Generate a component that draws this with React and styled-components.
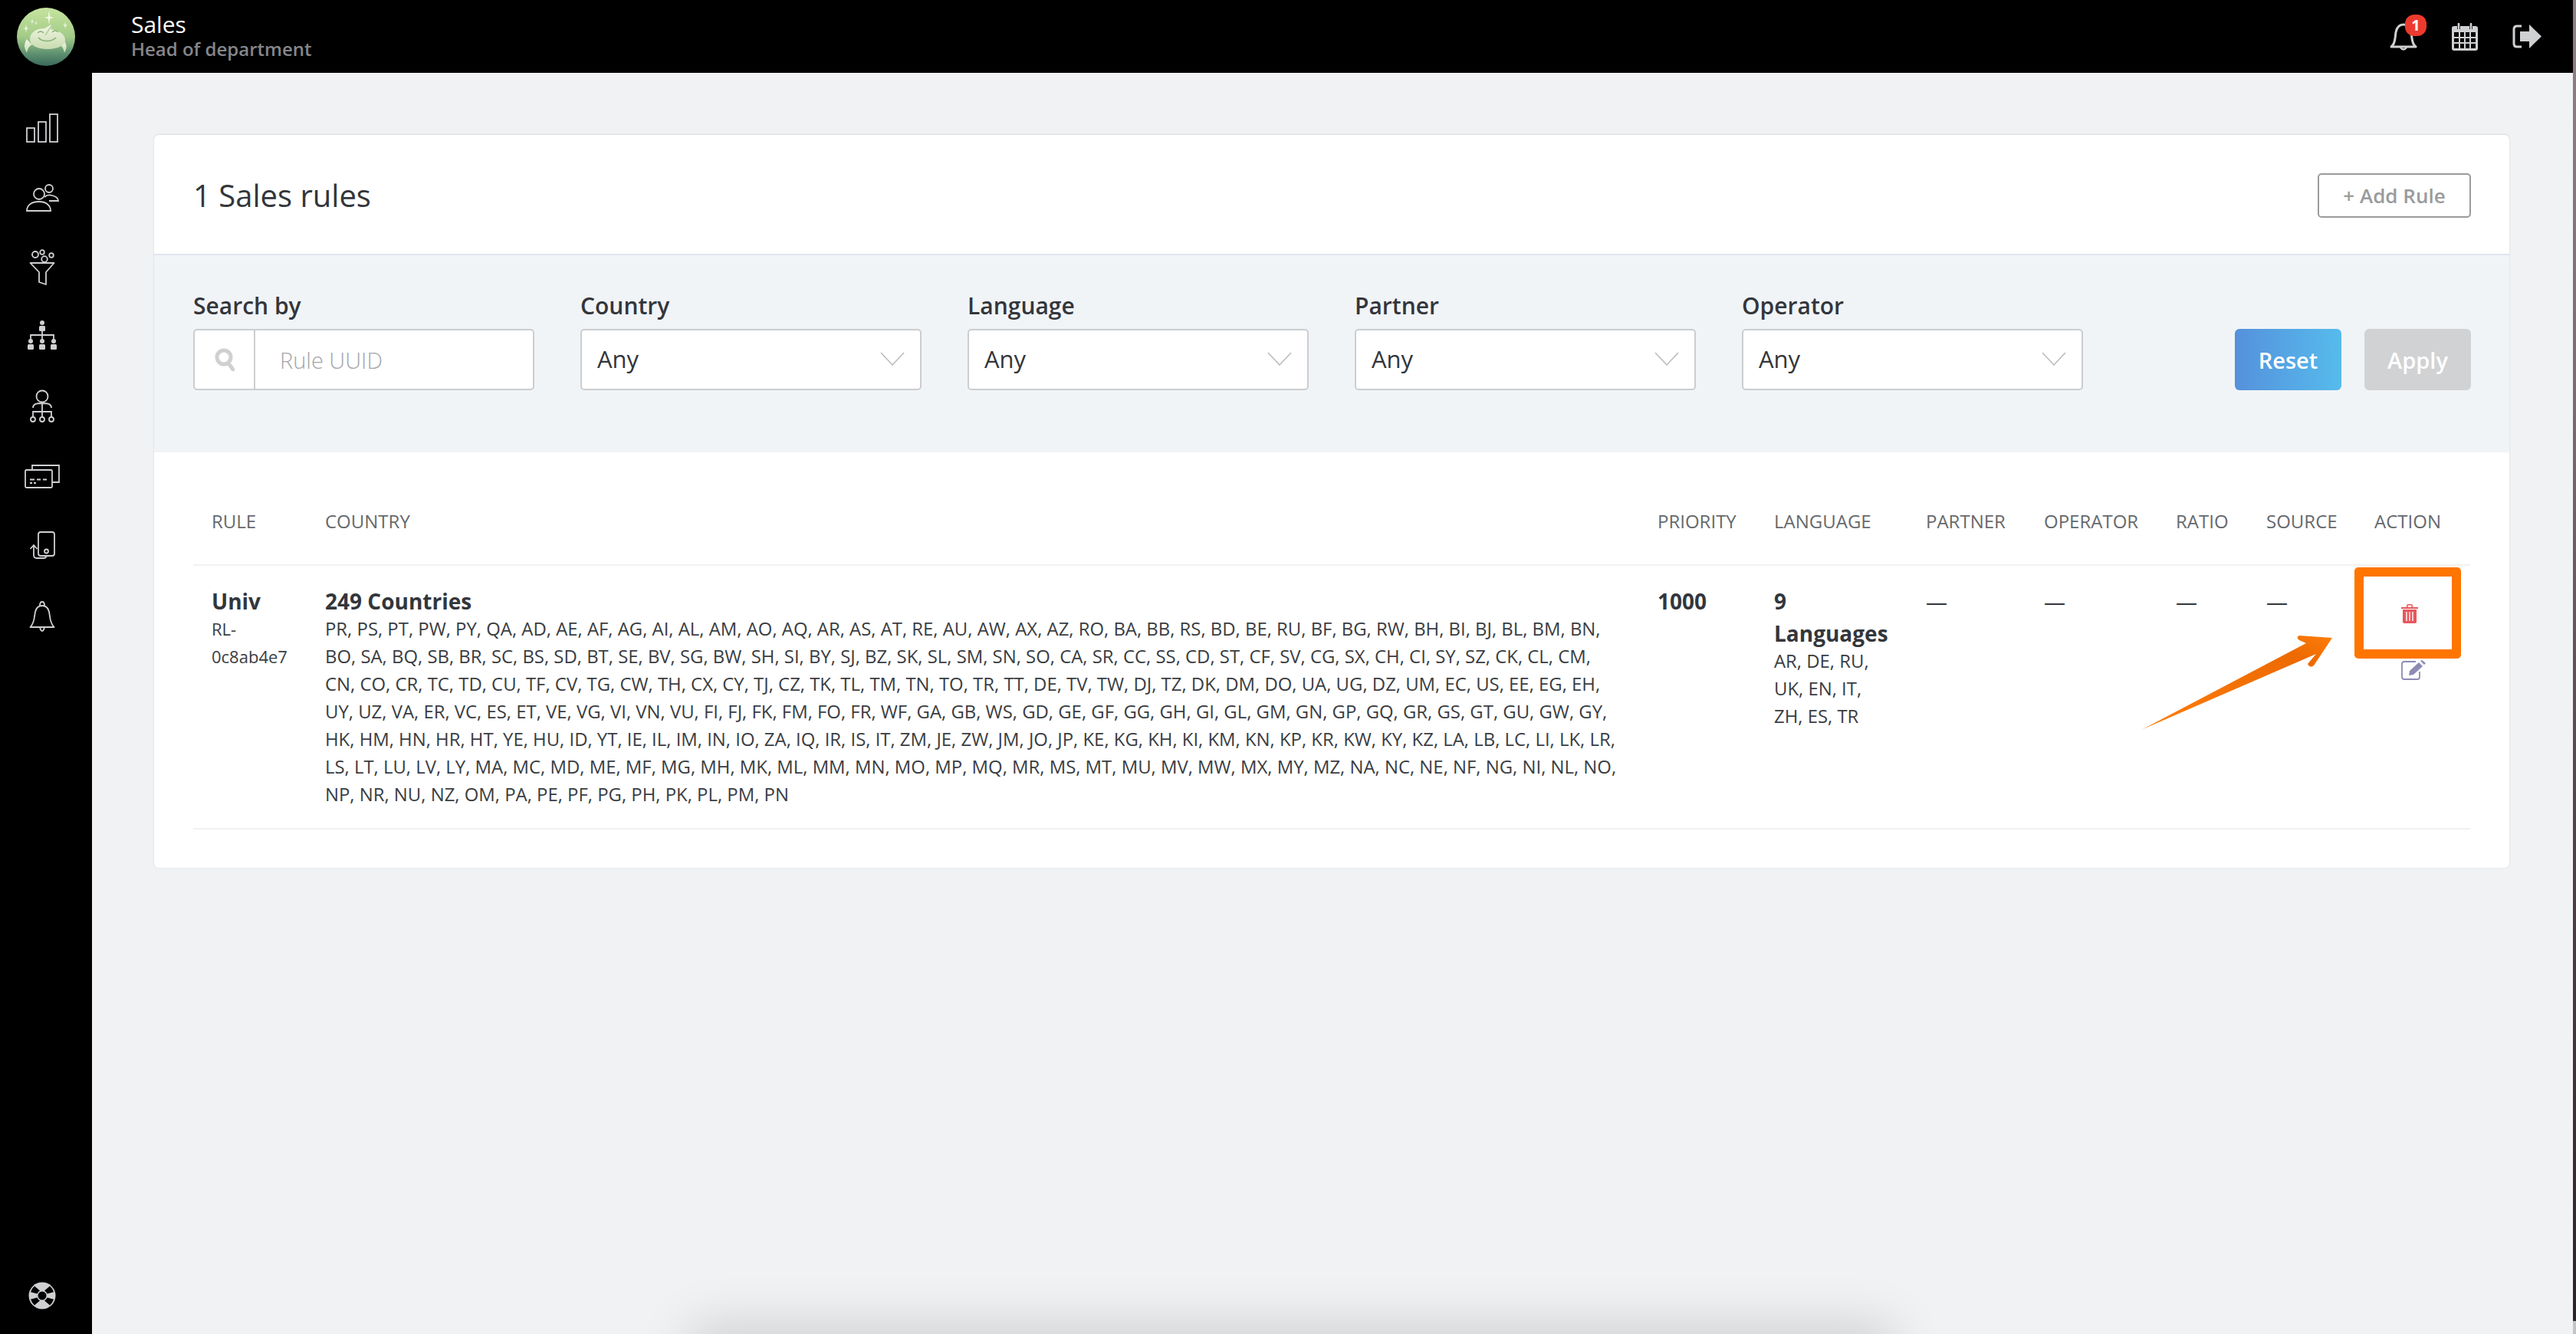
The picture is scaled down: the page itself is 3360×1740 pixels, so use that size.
import React from 'react'
import styled, { createGlobalStyle } from 'styled-components'

const GlobalStyle = createGlobalStyle`
  html, body {
    margin: 0;
    padding: 0;
    height: 100%;
    background: #f1f2f4;
  }
  body {
    font-family: "Open Sans", sans-serif;
    color: #33363b;
    overflow: hidden;
  }
`

const Page = styled.div`
  position: relative;
  display: grid;
  grid-template-columns: 120px 1fr;
  grid-template-rows: 95px 1fr;
  width: 3360px;
  height: 1740px;
  overflow: hidden;
`

const Topbar = styled.header`
  grid-column: 1 / 3;
  display: flex;
  align-items: center;
  background: #000;
  padding: 0 22px;
`

const Logo = styled.svg`
  width: 76px;
  height: 76px;
  flex: none;
`

const Titles = styled.div`
  margin-left: 73px;
  flex: 1;
  margin-top: -2px;
`

const Title = styled.div`
  font-size: 30px;
  line-height: 34px;
  color: #fff;
`

const Subtitle = styled.div`
  font-size: 24px;
  line-height: 30px;
  font-weight: 600;
  color: #85868a;
`

const TopIcons = styled.div`
  display: flex;
  align-items: center;
  gap: 45px;
  margin-right: 23px;
`

const BellWrap = styled.div`
  position: relative;
  width: 36px;
  height: 40px;
`

const Badge = styled.span`
  position: absolute;
  top: -9px;
  left: 20px;
  width: 28px;
  height: 28px;
  border-radius: 12px;
  background: #ee3a2e;
  color: #fff;
  font-size: 20px;
  font-weight: 700;
  line-height: 28px;
  text-align: center;
`

const Sidebar = styled.nav`
  display: flex;
  flex-direction: column;
  align-items: center;
  background: #000;
  padding: 48px 10px 32px 0;
`

const NavIcon = styled.svg`
  width: 48px;
  height: 48px;
  margin-bottom: 43px;
  fill: none;
  stroke: #cfd0d2;
  stroke-width: 1.8;
`

const NavSpacer = styled.div`
  flex: 1;
`

const HelpIcon = styled.svg`
  width: 36px;
  height: 36px;
`

const Main = styled.main`
  padding: 81px 87px 0 81px;
`

const Card = styled.section`
  background: #fff;
  border-radius: 6px;
  box-shadow: 0 -1px 2px #dcdddf, 0 0 2px #d6d7da;
`

const CardHead = styled.div`
  display: flex;
  align-items: center;
  justify-content: space-between;
  height: 155px;
  box-sizing: content-box;
  padding: 0 50px 0 51px;
  border-bottom: 2px solid #e1e7ef;
`

const CardTitle = styled.h1`
  margin: 2px 0 0;
  font-size: 40px;
  font-weight: 400;
  color: #33363b;
`

const AddButton = styled.button`
  width: 200px;
  height: 58px;
  margin-top: 2px;
  border: 2px solid #9a9b9c;
  border-radius: 5px;
  background: #fff;
  color: #9a9b9c;
  font: 600 26px "Open Sans", sans-serif;
`

const Filters = styled.div`
  display: flex;
  align-items: flex-end;
  height: 257px;
  padding: 0 50px 81px 51px;
  background: #f1f4f7;
  box-sizing: border-box;
`

const Field = styled.label`
  display: flex;
  flex-direction: column;
  width: 445px;
  margin-right: 60px;
`

const FieldLabel = styled.span`
  font-size: 30px;
  line-height: 40px;
  font-weight: 600;
  margin-bottom: 10px;
`

const SelectBox = styled.div`
  display: flex;
  align-items: center;
  justify-content: space-between;
  height: 80px;
  box-sizing: border-box;
  background: #fff;
  border: 2px solid #cbcdd0;
  border-radius: 5px;
  padding: 0 20px 3px 20px;
  font-size: 31px;
`

const SearchBox = styled.div`
  display: flex;
  align-items: stretch;
  height: 80px;
  box-sizing: border-box;
  background: #fff;
  border: 2px solid #cbcdd0;
  border-radius: 5px;
  font-size: 29px;
  font-weight: 300;
  color: #a4a6a9;
`

const SearchAddon = styled.span`
  display: flex;
  align-items: center;
  justify-content: center;
  width: 77px;
  border-right: 2px solid #cbcdd0;
`

const Placeholder = styled.span`
  display: flex;
  align-items: center;
  padding-left: 32px;
`

const Actions = styled.div`
  display: flex;
  gap: 30px;
  margin-left: auto;
`

const FilterButton = styled.button`
  width: 139px;
  height: 80px;
  border: none;
  border-radius: 6px;
  color: #fff;
  font: 600 29px "Open Sans", sans-serif;
  padding-top: 2px;
  background: ${p => (p.$primary ? 'linear-gradient(90deg, #5591dc, #56bbec)' : '#d1d2d4')};
`

const Table = styled.div`
  padding: 0 51px 50px;
`

const Row = styled.div`
  display: grid;
  grid-template-columns: 148px 1738px 152px 198px 154px 172px 118px 141px 1fr;
  border-bottom: 2px solid #f0f1f2;
`

const HeadCell = styled.div`
  height: 146px;
  padding: 74px 0 0 24px;
  box-sizing: border-box;
  font-size: 24px;
  line-height: 32px;
  color: #66696d;
`

const Cell = styled.div`
  padding: 25px 0 0 24px;
  height: 342px;
  box-sizing: border-box;
  min-width: 0;
`

const Strong = styled.div`
  font-size: 28px;
  line-height: 42px;
  font-weight: 700;
  color: #33363b;
`

const SmallList = styled.div`
  margin-top: -3px;
`

const Small = styled.div`
  font-size: ${p => p.$size || '23.9px'};
  line-height: 36px;
  color: #3a3d42;
  white-space: nowrap;
`

const Dash = styled.div`
  font-size: 28px;
  line-height: 42px;
  color: #33363b;
`

const ActionCell = styled(Cell)`
  display: flex;
  flex-direction: column;
  align-items: flex-start;
  padding: 50px 0 0 59px;
  gap: 48px;
`

const Highlight = styled.div`
  position: absolute;
  left: 3071px;
  top: 740px;
  width: 139px;
  height: 119px;
  box-sizing: border-box;
  border: 12px solid #ff7500;
  border-radius: 5px;
`

const Arrow = styled.svg`
  position: absolute;
  left: 2780px;
  top: 820px;
  width: 270px;
  height: 145px;
`

const BottomShade = styled.div`
  position: absolute;
  left: 910px;
  bottom: -60px;
  width: 1550px;
  height: 60px;
  box-shadow: 0 0 70px 8px rgba(0, 0, 0, 0.16);
`

const Edge = styled.div`
  position: absolute;
  right: 0;
  top: 0;
  width: 4px;
  height: 100%;
  background: linear-gradient(180deg, #8f7f88 0%, #7d6b73 30%, #55444a 60%, #2d2327 99%, #c4c4c4 99%);
`

const columns = ['RULE', 'COUNTRY', 'PRIORITY', 'LANGUAGE', 'PARTNER', 'OPERATOR', 'RATIO', 'SOURCE', 'ACTION']

const countryLines = [
  'PR, PS, PT, PW, PY, QA, AD, AE, AF, AG, AI, AL, AM, AO, AQ, AR, AS, AT, RE, AU, AW, AX, AZ, RO, BA, BB, RS, BD, BE, RU, BF, BG, RW, BH, BI, BJ, BL, BM, BN,',
  'BO, SA, BQ, SB, BR, SC, BS, SD, BT, SE, BV, SG, BW, SH, SI, BY, SJ, BZ, SK, SL, SM, SN, SO, CA, SR, CC, SS, CD, ST, CF, SV, CG, SX, CH, CI, SY, SZ, CK, CL, CM,',
  'CN, CO, CR, TC, TD, CU, TF, CV, TG, CW, TH, CX, CY, TJ, CZ, TK, TL, TM, TN, TO, TR, TT, DE, TV, TW, DJ, TZ, DK, DM, DO, UA, UG, DZ, UM, EC, US, EE, EG, EH,',
  'UY, UZ, VA, ER, VC, ES, ET, VE, VG, VI, VN, VU, FI, FJ, FK, FM, FO, FR, WF, GA, GB, WS, GD, GE, GF, GG, GH, GI, GL, GM, GN, GP, GQ, GR, GS, GT, GU, GW, GY,',
  'HK, HM, HN, HR, HT, YE, HU, ID, YT, IE, IL, IM, IN, IO, ZA, IQ, IR, IS, IT, ZM, JE, ZW, JM, JO, JP, KE, KG, KH, KI, KM, KN, KP, KR, KW, KY, KZ, LA, LB, LC, LI, LK, LR,',
  'LS, LT, LU, LV, LY, MA, MC, MD, ME, MF, MG, MH, MK, ML, MM, MN, MO, MP, MQ, MR, MS, MT, MU, MV, MW, MX, MY, MZ, NA, NC, NE, NF, NG, NI, NL, NO,',
  'NP, NR, NU, NZ, OM, PA, PE, PF, PG, PH, PK, PL, PM, PN',
]

const star = (x, y, r) =>
  `M${x} ${y - r} L${x + r * 0.14} ${y - r * 0.14} L${x + r * 0.7} ${y} L${x + r * 0.14} ${y + r * 0.14} L${x} ${y + r} L${x - r * 0.14} ${y + r * 0.14} L${x - r * 0.7} ${y} L${x - r * 0.14} ${y - r * 0.14} Z`

const LogoMark = () => (
  <Logo viewBox="0 0 76 76">
    <defs>
      <linearGradient id="logoBg" x1="0" y1="0" x2="0" y2="1">
        <stop offset="0" stopColor="#c6e4a0" />
        <stop offset="0.5" stopColor="#a2cb87" />
        <stop offset="0.8" stopColor="#5c8f70" />
        <stop offset="1" stopColor="#3a6a5a" />
      </linearGradient>
      <linearGradient id="logoHead" x1="0" y1="0" x2="0" y2="1">
        <stop offset="0" stopColor="#f2f6e6" />
        <stop offset="1" stopColor="#c9dcb0" />
      </linearGradient>
    </defs>
    <circle cx="38" cy="38" r="38" fill="url(#logoBg)" />
    <path d="M13 41 Q7 49 13 59 Q14 51 20 48 Q16 45 13 41 Z M60 41 Q68 49 62 59 Q61 51 55 48 Q59 45 60 41 Z" fill="url(#logoHead)" />
    <path d="M17 41 C17 33 25 27 36 27 L47 21 L44 28 C56 30 63 35 63 42 C63 50 52 54 40 54 C28 54 17 50 17 41 Z" fill="url(#logoHead)" />
    <path d="M47 21 L37 36" stroke="#9dc086" strokeWidth="1.2" />
    <path d="M28 39 C33 45 45 45 51 39" fill="none" stroke="#8cb27a" strokeWidth="1.6" />
    <path d="M27 33 q4 -4 8 0 M46 32 q4 -4 8 0" fill="none" stroke="#8cb27a" strokeWidth="1.4" />
    <path d={`${star(42, 13, 9)} ${star(12, 27, 6)} ${star(20, 18, 4)} ${star(25, 20, 3)} ${star(63, 23, 5)}`} fill="#f3f8e4" />
  </Logo>
)

const TrashIcon = () => (
  <svg width="22" height="25" viewBox="0 0 22 25" style={{ display: 'block' }}>
    <path d="M0 4 H22 V6 H0 Z M7 4 V2 Q7 0 9 0 H13 Q15 0 15 2 V4 H13.5 V1.5 H8.5 V4 Z" fill="#e8565c" />
    <path d="M2 7 H20 V23 Q20 25 18 25 H4 Q2 25 2 23 Z" fill="#e8565c" />
    <path d="M7 10 V22 M11 10 V22 M15 10 V22" stroke="#fff" strokeWidth="1.4" />
  </svg>
)

const EditIcon = () => (
  <svg width="32" height="26" viewBox="0 0 32 26" style={{ display: 'block' }}>
    <path d="M19 2 H4 Q1 2 1 5 V22 Q1 25 4 25 H21 Q24 25 24 22 V15" fill="none" stroke="#8c8bb4" strokeWidth="1.8" />
    <path d="M23 3 L28 8 L16 19 L10 20 L11 14 Z M25 1 L27 0 L32 4 L30 6 Z" fill="#8c8bb4" />
  </svg>
)

const Chevron = () => (
  <svg width="32" height="18" viewBox="0 0 32 18">
    <path d="M1 1 L16 17 L31 1" fill="none" stroke="#b9babd" strokeWidth="1.5" />
  </svg>
)

const SearchIcon = () => (
  <svg width="26" height="30" viewBox="0 0 26 30">
    <circle cx="12" cy="12" r="9" fill="none" stroke="#cfd0d2" strokeWidth="5" />
    <path d="M18 20 L24 28" stroke="#cfd0d2" strokeWidth="5" strokeLinecap="round" />
  </svg>
)

export default function App() {
  return (
    <Page>
      <GlobalStyle />
      <Topbar>
        <LogoMark />
        <Titles>
          <Title>Sales</Title>
          <Subtitle>Head of department</Subtitle>
        </Titles>
        <TopIcons>
          <BellWrap>
            <svg width="36" height="40" viewBox="0 0 36 40" fill="none" stroke="#cfd0d2" strokeWidth="3">
              <path d="M2 33 Q6 30 7 22 L8 14 Q10 4 18 4 Q26 4 28 14 L29 22 Q30 30 34 33 Z" strokeLinejoin="round" />
              <path d="M14 34 Q18 39 22 34" strokeWidth="2.4" />
            </svg>
            <Badge>1</Badge>
          </BellWrap>
          <svg width="34" height="36" viewBox="0 0 34 36">
            <path fillRule="evenodd" fill="#cfd0d2" d="M3 4 H7 V8 H11 V4 H23 V8 H27 V4 H31 Q34 4 34 7 V33 Q34 36 31 36 H3 Q0 36 0 33 V7 Q0 4 3 4 Z M3 12 V18 H9 V12 Z M11 12 V18 H16 V12 Z M18 12 V18 H23 V12 Z M25 12 V18 H31 V12 Z M3 20 V25 H9 V20 Z M11 20 V25 H16 V20 Z M18 20 V25 H23 V20 Z M25 20 V25 H31 V20 Z M3 27 V33 H9 V27 Z M11 27 V33 H16 V27 Z M18 27 V33 H23 V27 Z M25 27 V33 H31 V27 Z" />
            <path d="M9 1 V7 M25 1 V7" stroke="#cfd0d2" strokeWidth="2.6" strokeLinecap="round" />
          </svg>
          <svg width="38" height="31" viewBox="0 0 38 31">
            <path d="M12 2 H6 Q2 2 2 6 V25 Q2 29 6 29 H12" fill="none" stroke="#cfd0d2" strokeWidth="3" />
            <path d="M10 9 H22 V0 L38 15.5 L22 31 V22 H10 Z" fill="#cfd0d2" />
          </svg>
        </TopIcons>
      </Topbar>

      <Sidebar>
        <NavIcon viewBox="0 0 48 48">
          <rect x="4" y="24" width="10" height="18" />
          <rect x="19" y="16" width="10" height="26" />
          <rect x="34" y="6" width="10" height="36" />
        </NavIcon>
        <NavIcon viewBox="0 0 48 48">
          <circle cx="20" cy="19" r="7" />
          <path d="M4 41 C4 33 11 29 20 29 C28 29 35 33 35 41 Z" />
          <circle cx="33" cy="12" r="5" />
          <path d="M27 23 C30 20 34 20 37 21 C41 22 45 24 45 28 H33" />
        </NavIcon>
        <NavIcon viewBox="0 0 48 48">
          <circle cx="15" cy="7" r="4" />
          <circle cx="24" cy="4" r="2.8" />
          <circle cx="36" cy="8" r="2.8" />
          <circle cx="27" cy="13" r="3.8" />
          <path d="M8.5 18 H39.5 L29 30 V46 L20 43 V30 Z" strokeLinejoin="round" />
        </NavIcon>
        <NavIcon viewBox="0 0 48 48">
          <path d="M9 26 V21 H39 V26 M24 15 V30" />
          <g fill="#cfd0d2" stroke="none">
            <circle cx="24" cy="5" r="3" />
            <rect x="20" y="9" width="8" height="7" rx="1.5" />
            <circle cx="9" cy="29" r="3" />
            <rect x="5" y="33" width="8" height="7" rx="1.5" />
            <circle cx="24" cy="29" r="3" />
            <rect x="20" y="33" width="8" height="7" rx="1.5" />
            <circle cx="39" cy="29" r="3" />
            <rect x="35" y="33" width="8" height="7" rx="1.5" />
          </g>
        </NavIcon>
        <NavIcon viewBox="0 0 48 48">
          <circle cx="24" cy="10" r="7.5" />
          <path d="M12 25 C12 20 16 19 24 19 C32 19 36 20 36 25 M24 19 V37 M12 37 V30 H36 V37" />
          <circle cx="12" cy="40" r="3" />
          <circle cx="24" cy="40" r="3" />
          <circle cx="36" cy="40" r="3" />
        </NavIcon>
        <NavIcon viewBox="0 0 48 48">
          <rect x="2" y="15" width="35" height="23" rx="1.5" />
          <path d="M11 15 V9 H46 V31 H37" />
          <path d="M8 27.5 H14 M17 27.5 H22 M25 27.5 H30 M8 32 H11 M13 32 H16" />
        </NavIcon>
        <NavIcon viewBox="0 0 48 48">
          <rect x="19" y="5" width="21" height="31" rx="3" />
          <circle cx="29.5" cy="30" r="2.5" />
          <path d="M13 23 V35 Q13 39 17 39 H26 Q29 39 30 36 M8.5 27 L13 22 L17.5 27" />
        </NavIcon>
        <NavIcon viewBox="0 0 48 48">
          <path d="M8.5 38 Q13 33 14 24 L15 18 Q17 10 24 10 Q31 10 33 18 L34 24 Q35 33 39.5 38 Z" strokeLinejoin="round" />
          <path d="M21 10 Q21 5 24 5 Q27 5 27 10 M21 38 Q22 43 24 43 Q26 43 27 38" />
        </NavIcon>
        <NavSpacer />
        <HelpIcon viewBox="0 0 36 36">
          <circle cx="18" cy="18" r="17.5" fill="#cfd0d2" />
          <path fill="#000" d="M8 5.5 Q4.5 8.5 3 13.2 L11.5 15.6 Q12.5 13 15 11.5 Z M28 5.5 Q31.5 8.5 33 13.2 L24.5 15.6 Q23.5 13 21 11.5 Z M8 30.5 Q4.5 27.5 3 22.8 L11.5 20.4 Q12.5 23 15 24.5 Z M28 30.5 Q31.5 27.5 33 22.8 L24.5 20.4 Q23.5 23 21 24.5 Z" />
          <circle cx="18" cy="18" r="5.5" fill="#000" />
        </HelpIcon>
      </Sidebar>

      <Main>
        <Card>
          <CardHead>
            <CardTitle>1 Sales rules</CardTitle>
            <AddButton>+ Add Rule</AddButton>
          </CardHead>
          <Filters>
            <Field>
              <FieldLabel>Search by</FieldLabel>
              <SearchBox>
                <SearchAddon><SearchIcon /></SearchAddon>
                <Placeholder>Rule UUID</Placeholder>
              </SearchBox>
            </Field>
            {['Country', 'Language', 'Partner', 'Operator'].map(label => (
              <Field key={label}>
                <FieldLabel>{label}</FieldLabel>
                <SelectBox>
                  Any
                  <Chevron />
                </SelectBox>
              </Field>
            ))}
            <Actions>
              <FilterButton $primary>Reset</FilterButton>
              <FilterButton>Apply</FilterButton>
            </Actions>
          </Filters>
          <Table>
            <Row>
              {columns.map(name => (
                <HeadCell key={name}>{name}</HeadCell>
              ))}
            </Row>
            <Row>
              <Cell>
                <Strong>Univ</Strong>
                <SmallList>
                  <Small $size="22px">RL-</Small>
                  <Small $size="22px">0c8ab4e7</Small>
                </SmallList>
              </Cell>
              <Cell>
                <Strong>249 Countries</Strong>
                <SmallList>
                  {countryLines.map(line => (
                    <Small key={line}>{line}</Small>
                  ))}
                </SmallList>
              </Cell>
              <Cell>
                <Strong>1000</Strong>
              </Cell>
              <Cell>
                <Strong>9</Strong>
                <Strong>Languages</Strong>
                <SmallList>
                  <Small>AR, DE, RU,</Small>
                  <Small>UK, EN, IT,</Small>
                  <Small>ZH, ES, TR</Small>
                </SmallList>
              </Cell>
              <Cell><Dash>—</Dash></Cell>
              <Cell><Dash>—</Dash></Cell>
              <Cell><Dash>—</Dash></Cell>
              <Cell><Dash>—</Dash></Cell>
              <ActionCell>
                <TrashIcon />
                <EditIcon />
              </ActionCell>
            </Row>
          </Table>
        </Card>
      </Main>

      <Highlight />
      <Arrow viewBox="2780 820 270 145">
        <defs>
          <linearGradient id="arrowFill" x1="0" y1="1" x2="1" y2="0">
            <stop offset="0" stopColor="#ff7d0a" />
            <stop offset="0.8" stopColor="#ec6a00" />
            <stop offset="1" stopColor="#ff7d0a" />
          </linearGradient>
        </defs>
        <path d="M2793 952 L3008 839 L2999 835 Q2994 831 2999 829 L3042 832 L3018 868 Q3013 872 3010 866 L3021 853 Z" fill="url(#arrowFill)" />
      </Arrow>
      <BottomShade />
      <Edge />
    </Page>
  )
}
